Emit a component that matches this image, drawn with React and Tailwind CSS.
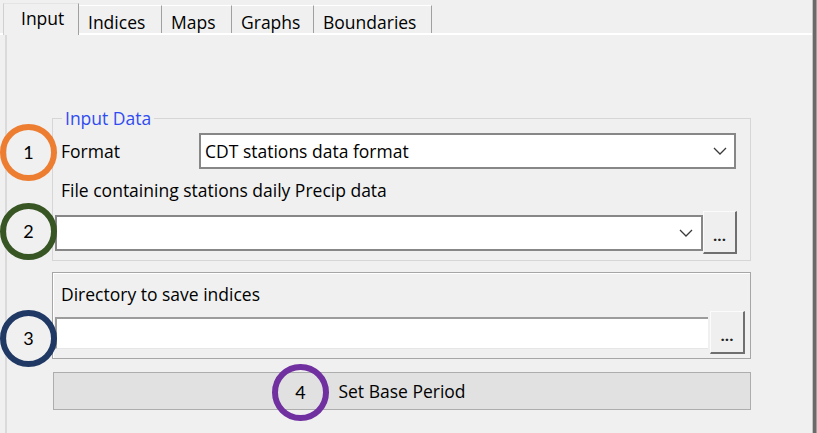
import React from 'react'

function Chevron() {
  return (
    <svg width="14" height="8" viewBox="0 0 14 8" className="shrink-0">
      <polyline points="1,1 7,7 13,1" fill="none" stroke="#3a3a3a" strokeWidth="1.3" />
    </svg>
  )
}

function DotsButton({ className = '' }) {
  return (
    <button
      className={`flex items-end justify-center pb-[9px] bg-[#efefef] border-t border-l border-t-[#fbfbfb] border-l-[#fbfbfb] border-r-2 border-b-2 border-r-[#6f6f6f] border-b-[#6f6f6f] text-[15px] font-bold leading-none text-[#222] ${className}`}
    >
      ...
    </button>
  )
}

function Ring({ color, label, className }) {
  return (
    <div
      className={`absolute w-[57px] h-[57px] rounded-full border-[6px] flex items-center justify-center font-['Lato',sans-serif] text-[18px] text-black ${color} ${className}`}
    >
      {label}
    </div>
  )
}

const tabs = [
  { name: 'Indices', w: 'w-[83px]' },
  { name: 'Maps', w: 'w-[70px]' },
  { name: 'Graphs', w: 'w-[82px]' },
  { name: 'Boundaries', w: 'w-[118px]' },
]

export default function App() {
  return (
    <div className="relative flex w-[817px] h-[433px] overflow-hidden bg-[#f0f0f0] font-['Open_Sans',sans-serif] text-[17.5px] text-black">
      <div className="w-[812px] flex flex-col">
        {/* Tab strip */}
        <div className="flex items-end h-[35px] pl-[3px] border-b-2 border-white">
          <div className="-mb-[2px] w-[76px] h-[32px] pl-[17px] pt-[3px] leading-[22px] bg-[#f0f0f0] border-l border-t border-l-[#d0d0d0] border-t-[#e4e4e4] border-r border-r-[#a0a0a0]">
            Input
          </div>
          {tabs.map(t => (
            <div
              key={t.name}
              className={`${t.w} h-[28px] pl-[9px] pt-[5px] leading-[22px] border-t border-t-white border-r border-r-[#a0a0a0]`}
            >
              {t.name}
            </div>
          ))}
        </div>

        {/* Page */}
        <div className="flex-1 ml-[5px] border-l-2 border-[#dadada] pl-[45px] pt-[72px]">
          <fieldset className="w-[699px] border border-[#d6d6d6] pb-[6px]">
            <legend className="ml-[9px] px-[3px] leading-[22px] text-[#2f4bf2]">Input Data</legend>

            <div className="flex items-center mt-[4px] h-[36px]">
              <div className="w-[146px] pl-[8px]">Format</div>
              <div className="w-[537px] h-[36px] flex items-center justify-between pl-[4px] pr-[7px] bg-white border-2 border-[#878787]">
                <span>CDT stations data format</span>
                <Chevron />
              </div>
            </div>

            <div className="mt-[10px] h-[22px] leading-[22px] pl-[8px]">
              File containing stations daily Precip data
            </div>

            <div className="flex items-center mt-[10px] h-[43px]">
              <div className="ml-[2px] w-[648px] h-[36px] flex items-center justify-end pr-[8px] bg-white border-2 border-[#878787]">
                <Chevron />
              </div>
              <DotsButton className="w-[34px] h-[43px]" />
            </div>
          </fieldset>

          <div className="mt-[11px] w-[699px] border border-[#a6a6a6] shadow-[inset_1px_1px_0_#ffffff] pt-[10px] pb-[4px]">
            <div className="h-[22px] leading-[22px] pl-[8px]">Directory to save indices</div>
            <div className="flex items-center mt-[6px] h-[43px]">
              <div className="ml-[2px] w-[653px] h-[32px] bg-white border-t-2 border-l-2 border-t-[#9c9c9c] border-l-[#9c9c9c] border-b border-b-[#e6e6e6]" />
              <DotsButton className="ml-[2px] w-[35px] h-[43px]" />
            </div>
          </div>

          <button className="mt-[13px] ml-[1px] w-[698px] h-[38px] flex items-center justify-center bg-[#e1e1e1] border border-[#adadad] leading-[22px]">
            Set Base Period
          </button>
        </div>
      </div>

      {/* Window edge */}
      <div className="w-[5px] h-full flex">
        <div className="w-[1px] bg-[#c4c4c4]" />
        <div className="w-[3px] bg-[#6a6a6a]" />
        <div className="w-[1px] bg-[#a0a0a0]" />
      </div>

      {/* Annotation rings */}
      <Ring color="border-[#ed7d31]" label="1" className="left-[0px] top-[124px]" />
      <Ring color="border-[#375623]" label="2" className="left-[0px] top-[203px]" />
      <Ring color="border-[#1f3864]" label="3" className="left-[0px] top-[310px]" />
      <Ring color="border-[#7030a0]" label="4" className="left-[272px] top-[364px]" />
    </div>
  )
}
